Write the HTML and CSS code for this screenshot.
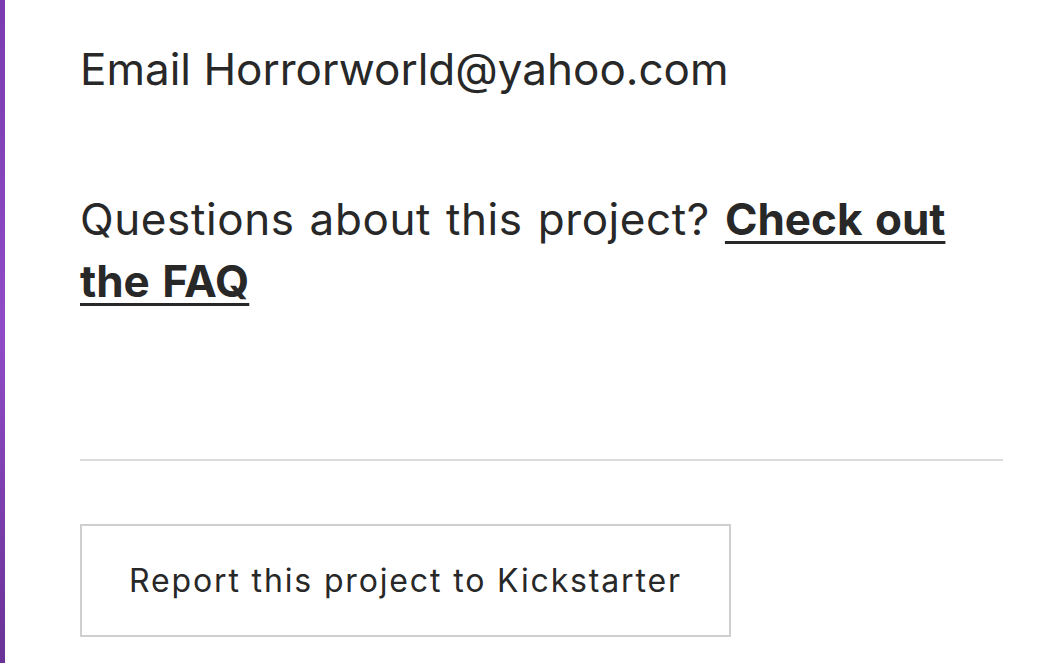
FILE: index.html
```html
<!DOCTYPE html>
<html lang="en">

<head>
  <meta charset="UTF-8">
  <meta name="viewport" content="width=device-width, initial-scale=1.0">
  <title>Project support</title>
  <link rel="stylesheet" href="styles.css">
</head>

<body>
  <div class="page">
    <div class="side-bar"></div>
    <div class="content">
      <p class="email">Email Horrorworld@yahoo.com</p>
      <p class="faq">Questions about this project? <a href="#" class="faq-link">Check out the FAQ</a></p>
      <hr class="divider">
      <button class="report-btn">Report this project to Kickstarter</button>
    </div>
  </div>
</body>

</html>
```

FILE: styles.css
```css
body {
  font-family: 'Inter', 'Liberation Sans', sans-serif;
  background-color: #fff;
  color: #282828;
  margin: 0;
  padding: 0;
}

.page {
  display: flex;
  min-height: 663px;
}

.side-bar {
  width: 5px;
  flex-shrink: 0;
  background: linear-gradient(to bottom, #7a3cae, #8f4cc6 50%, #6a3296);
}

.content {
  flex: 1;
  padding: 0 45px 0 75px;
}

.email {
  font-size: 44px;
  line-height: 62px;
  margin: 38px 0 0;
}

.faq {
  font-size: 44px;
  line-height: 62px;
  letter-spacing: 0.6px;
  word-spacing: 2px;
  margin: 88px 0 0;
}

.faq-link {
  color: #282828;
  font-weight: 700;
  letter-spacing: 0;
  text-decoration: underline;
  text-decoration-thickness: 3px;
  text-underline-offset: 6px;
}

.divider {
  border: none;
  border-top: 2px solid #dcdcdc;
  margin: 147px 0 0;
}

.report-btn {
  margin-top: 63px;
  width: 651px;
  height: 113px;
  background: #fff;
  border: 2px solid #cfcfcf;
  font-family: 'Inter', 'Liberation Sans', sans-serif;
  font-size: 32px;
  letter-spacing: 1.85px;
  color: #282828;
  cursor: pointer;
}
```
